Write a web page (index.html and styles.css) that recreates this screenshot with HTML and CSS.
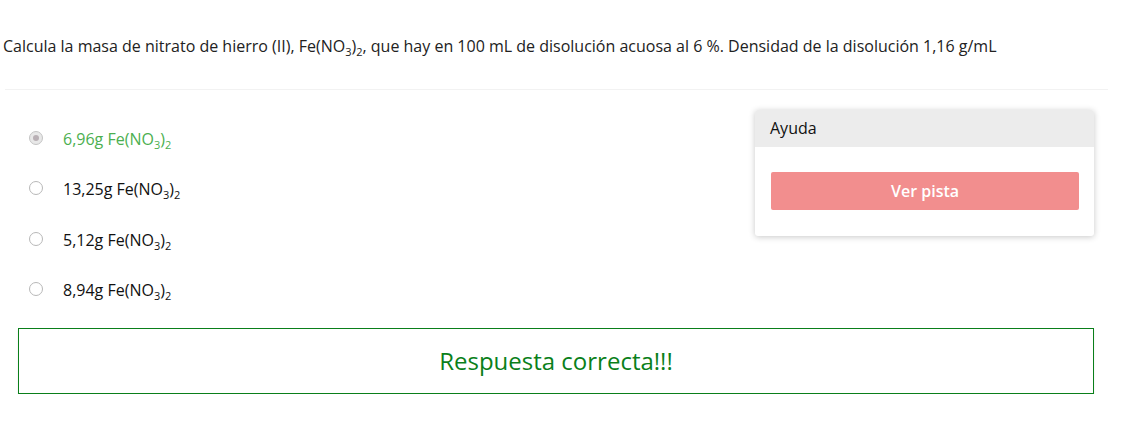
FILE: index.html
```html
<!DOCTYPE html>
<html lang="es">
<head>
    <meta charset="UTF-8">
    <title>Pregunta</title>
    <link rel="stylesheet" href="styles.css">
</head>
<body>
    <div class="question">
        <p class="statement">Calcula la masa de nitrato de hierro (II), Fe(NO<sub>3</sub>)<sub>2</sub>, que hay en 100 mL de disolución acuosa al 6 %. Densidad de la disolución 1,16 g/mL</p>
        <hr class="divider">

        <div class="row">
            <!-- Opciones -->
            <ul class="options">
                <li class="option selected"><span class="radio"></span><span>6,96g Fe(NO<sub>3</sub>)<sub>2</sub></span></li>
                <li class="option"><span class="radio"></span><span>13,25g Fe(NO<sub>3</sub>)<sub>2</sub></span></li>
                <li class="option"><span class="radio"></span><span>5,12g Fe(NO<sub>3</sub>)<sub>2</sub></span></li>
                <li class="option"><span class="radio"></span><span>8,94g Fe(NO<sub>3</sub>)<sub>2</sub></span></li>
            </ul>

            <!-- Ayuda -->
            <div class="help-panel">
                <div class="help-heading">Ayuda</div>
                <div class="help-body">
                    <button class="hint-button">Ver pista</button>
                </div>
            </div>
        </div>

        <div class="result">Respuesta correcta!!!</div>
    </div>
</body>
</html>
```

FILE: styles.css
```css
body {
    margin: 0;
    font-family: "Open Sans", Arial, sans-serif;
    font-size: 16px;
    color: #222;
    background: white;
}

sub {
    font-size: 11px;
    vertical-align: -4px;
    line-height: 0;
}

.question {
    padding: 0 13px 0 3px;
}

.statement {
    margin: 0;
    padding-top: 35px;
    line-height: 22px;
}

.divider {
    border: none;
    border-top: 1px solid #f2f2f2;
    margin: 32px 0 0 2px;
}

.row {
    display: flex;
    justify-content: space-between;
    align-items: flex-start;
}

.options {
    list-style: none;
    margin: 0;
    padding: 38px 0 0 26px;
}

.option {
    display: flex;
    align-items: center;
    height: 22px;
    margin-bottom: 28.3px;
    color: #111;
}

.option.selected {
    color: #4caf50;
}

.radio {
    box-sizing: border-box;
    width: 14px;
    height: 14px;
    border: 1.5px solid #b8b8b8;
    border-radius: 50%;
    margin-right: 20px;
    background: white;
    position: relative;
    top: -1px;
}

.selected .radio {
    border-color: #c4c4c4;
    background: #e8e8e8;
}

.selected .radio::after {
    content: "";
    position: absolute;
    left: 2.5px;
    top: 2.5px;
    width: 6px;
    height: 6px;
    border-radius: 50%;
    background: #b9b0b5;
}

.help-panel {
    width: 339px;
    margin-top: 20px;
    margin-right: 14px;
    border-radius: 3px;
    background: white;
    box-shadow: 0 1px 6px rgba(0, 0, 0, 0.22);
    overflow: hidden;
}

.help-heading {
    background: #ececec;
    height: 37px;
    line-height: 37px;
    padding: 0 15px;
    color: #111;
}

.help-body {
    padding: 25px 15px 26px 16px;
}

.hint-button {
    display: block;
    width: 100%;
    height: 38px;
    border: none;
    border-radius: 2px;
    background: #f28e8e;
    color: white;
    font-family: "Open Sans", Arial, sans-serif;
    font-size: 16px;
    font-weight: 600;
}

.result {
    margin: -1px 14px 0 15px;
    height: 64px;
    line-height: 64px;
    border: 1px solid #0a7f1a;
    box-shadow: 0 2px 2px rgba(0, 0, 0, 0.08);
    text-align: center;
    color: #0a7f1a;
    font-size: 24px;
}
```
